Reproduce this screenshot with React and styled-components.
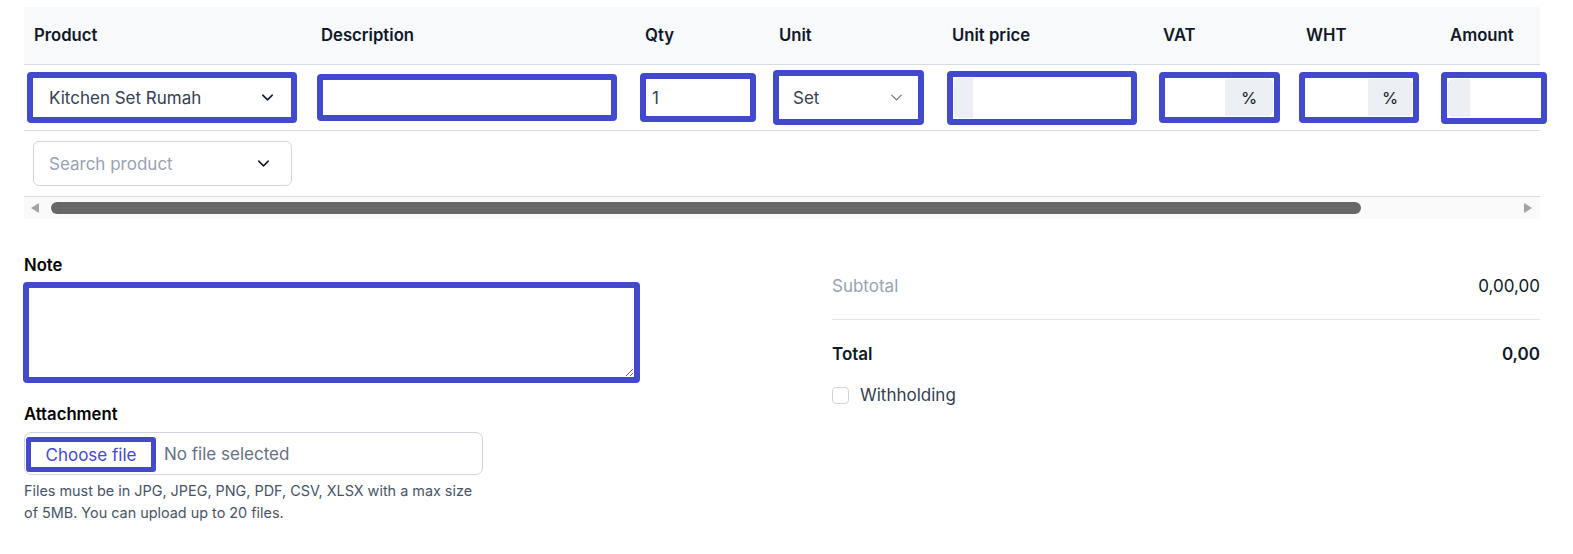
import styled, { createGlobalStyle } from 'styled-components';
import { ChevronDown } from 'lucide-react';

const GlobalStyle = createGlobalStyle`
  body {
    margin: 0;
    background: #fff;
    font-family: Inter, "Noto Sans", sans-serif;
    color: #344054;
  }
  * { box-sizing: border-box; }
`

const columns = [
  { key: 'product', label: 'Product', width: 287 },
  { key: 'desc', label: 'Description', width: 324 },
  { key: 'qty', label: 'Qty', width: 134 },
  { key: 'unit', label: 'Unit', width: 173 },
  { key: 'price', label: 'Unit price', width: 211 },
  { key: 'vat', label: 'VAT', width: 143 },
  { key: 'wht', label: 'WHT', width: 144 },
  { key: 'amount', label: 'Amount', width: 100 },
]
const template = columns.map(c => `${c.width}px`).join(' ')

const App = () => {
  return (
    <>
      <GlobalStyle />
      <Page>
        <TableWrap>
          <HeaderRow>
            {columns.map(c => <HeadCell key={c.key}>{c.label}</HeadCell>)}
          </HeaderRow>
          <BodyRow>
            <Cell>
              <Field $w={270} $h={51} $ml={3}>
                <FieldText>Kitchen Set Rumah</FieldText>
                <Chevron><ChevronDown size={19} strokeWidth={1.9} color="#101828" /></Chevron>
              </Field>
            </Cell>
            <Cell><Field $w={300} $h={47} $ml={6} /></Cell>
            <Cell>
              <Field $w={116} $h={49} $ml={5}>
                <FieldText $pl={6}>1</FieldText>
              </Field>
            </Cell>
            <Cell>
              <Field $w={151} $h={55} $ml={4}>
                <FieldText $pl={14}>Set</FieldText>
                <Chevron $mr={12}><ChevronDown size={19} strokeWidth={1.4} color="#667085" /></Chevron>
              </Field>
            </Cell>
            <Cell>
              <Field $w={190} $h={54} $ml={5}>
                <Addon $w={19} $side="left" />
              </Field>
            </Cell>
            <Cell>
              <Field $w={121} $h={51} $ml={6}>
                <Spacer />
                <Addon $w={48} $side="right">%</Addon>
              </Field>
            </Cell>
            <Cell>
              <Field $w={120} $h={51} $ml={3}>
                <Spacer />
                <Addon $w={44} $side="right">%</Addon>
              </Field>
            </Cell>
            <Cell>
              <Field $w={106} $h={52} $ml={1}>
                <Addon $w={22} $side="left" />
              </Field>
            </Cell>
          </BodyRow>
          <BodyRow>
            <Cell>
              <SearchSelect>
                <Placeholder>Search product</Placeholder>
                <ChevronDown size={19} strokeWidth={1.9} color="#101828" />
              </SearchSelect>
            </Cell>
          </BodyRow>
          <ScrollBar>
            <Arrow $dir="left" />
            <Thumb />
            <Arrow $dir="right" />
          </ScrollBar>
        </TableWrap>

        <BottomGrid>
          <LeftCol>
            <Label>Note</Label>
            <NoteArea />
            <Label style={{ marginTop: 21 }}>Attachment</Label>
            <FileBox>
              <ChooseBtn>Choose file</ChooseBtn>
              <NoFile>No file selected</NoFile>
            </FileBox>
            <Help>Files must be in JPG, JPEG, PNG, PDF, CSV, XLSX with a max size of 5MB. You can upload up to 20 files.</Help>
          </LeftCol>
          <Summary>
            <SumRow>
              <SumLabel>Subtotal</SumLabel>
              <SumValue>0,00,00</SumValue>
            </SumRow>
            <Divider />
            <SumRow>
              <SumLabel $bold>Total</SumLabel>
              <SumValue $bold>0,00</SumValue>
            </SumRow>
            <CheckRow>
              <CheckBox />
              <CheckLabel>Withholding</CheckLabel>
            </CheckRow>
          </Summary>
        </BottomGrid>
      </Page>
    </>
  );
}

const Page = styled.div`
  padding: 7px 33px 0 24px;
  width: 1573px;
`
const TableWrap = styled.div`
  width: 1516px;
`
const HeaderRow = styled.div`
  display: grid;
  grid-template-columns: ${template};
  height: 58px;
  background: #f8f9fb;
  border-bottom: 1px solid #d5dce5;
`
const HeadCell = styled.div`
  display: flex;
  align-items: center;
  padding: 0 10px 2px;
  font-size: 16.7px;
  font-weight: 600;
  color: #101828;
  white-space: nowrap;
`
const BodyRow = styled.div`
  display: grid;
  grid-template-columns: ${template};
  height: 66px;
  border-bottom: 1px solid #d5dce5;
`
const Cell = styled.div`
  display: flex;
  align-items: center;
  min-width: 0;
`
const Field = styled.div`
  flex: none;
  width: ${p => p.$w}px;
  height: ${p => p.$h}px;
  margin-left: ${p => p.$ml}px;
  border: 6px solid #4349cc;
  border-radius: 4px;
  background: #fff;
  display: flex;
  align-items: center;
  overflow: hidden;
`
const FieldText = styled.span`
  flex: 1;
  padding-left: ${p => p.$pl ?? 16}px;
  font-size: 17px;
  color: #344054;
  white-space: nowrap;
`
const Chevron = styled.span`
  display: flex;
  margin-right: ${p => p.$mr ?? 14}px;
`
const Spacer = styled.span`
  flex: 1;
`
const Addon = styled.span`
  width: ${p => p.$w}px;
  align-self: stretch;
  margin: 1px;
  background: #eceff3;
  border-radius: ${p => p.$side === 'left' ? '5px 0 0 5px' : '0 5px 5px 0'};
  display: flex;
  align-items: center;
  justify-content: center;
  font-size: 16.5px;
  color: #101828;
`
const SearchSelect = styled.div`
  width: 259px;
  height: 45px;
  margin-left: 9px;
  border: 1px solid #d0d5dd;
  border-radius: 6px;
  display: flex;
  align-items: center;
  justify-content: space-between;
  padding: 0 18px 0 15px;
`
const Placeholder = styled.span`
  font-size: 17px;
  color: #98a2b3;
`
const ScrollBar = styled.div`
  height: 22px;
  background: #fafafa;
  display: flex;
  align-items: center;
  padding: 0 8px 0 7px;
  gap: 12px;
`
const Arrow = styled.span`
  width: 0;
  height: 0;
  border-top: 5px solid transparent;
  border-bottom: 5px solid transparent;
  ${p => p.$dir === 'left'
    ? 'border-right: 8px solid #a3a3a3;'
    : 'border-left: 8px solid #a3a3a3; margin-left: auto;'}
`
const Thumb = styled.span`
  width: 1310px;
  height: 12px;
  border-radius: 6px;
  background: #686868;
`
const BottomGrid = styled.div`
  display: grid;
  grid-template-columns: 1fr 708px;
  width: 1516px;
  margin-top: 36px;
`
const LeftCol = styled.div`
  display: flex;
  flex-direction: column;
  align-items: flex-start;
`
const Label = styled.div`
  font-size: 16.7px;
  font-weight: 600;
  line-height: 20px;
  color: #000;
  margin-bottom: 7px;
`
const NoteArea = styled.textarea`
  width: 617px;
  height: 101px;
  margin-left: -1px;
  border: 6px solid #4349cc;
  border-radius: 4px;
  outline: none;
  resize: vertical;
  font-family: inherit;
`
const FileBox = styled.div`
  width: 459px;
  height: 43px;
  margin-top: 1px;
  border: 1px solid #d0d5dd;
  border-radius: 7px;
  display: flex;
  align-items: center;
  padding-left: 1px;
`
const ChooseBtn = styled.button`
  width: 130px;
  height: 35px;
  margin-top: 2px;
  border: 5px solid #4349cc;
  border-radius: 3px;
  background: #fff;
  font-family: inherit;
  font-size: 17px;
  color: #4349cc;
  padding: 0;
`
const NoFile = styled.span`
  margin-left: 8px;
  font-size: 17px;
  color: #667085;
`
const Help = styled.p`
  width: 456px;
  margin: 5px 0 0;
  font-size: 14.4px;
  line-height: 22px;
  color: #475467;
`
const Summary = styled.div`
  padding-top: 19px;
`
const SumRow = styled.div`
  display: flex;
  justify-content: space-between;
  align-items: center;
  line-height: 24px;
`
const SumLabel = styled.span`
  font-size: 17px;
  color: ${p => p.$bold ? '#101828' : '#98a2b3'};
  font-weight: ${p => p.$bold ? 600 : 400};
`
const SumValue = styled.span`
  font-size: 17px;
  color: #101828;
  font-weight: ${p => p.$bold ? 600 : 400};
`
const Divider = styled.div`
  height: 1px;
  background: #e4e7ec;
  margin: 21px 0 22px;
`
const CheckRow = styled.label`
  display: flex;
  align-items: center;
  gap: 11px;
  margin-top: 17px;
  line-height: 24px;
`
const CheckBox = styled.span`
  width: 17px;
  height: 17px;
  border: 1px solid #d0d5dd;
  border-radius: 4px;
  background: #fff;
`
const CheckLabel = styled.span`
  font-size: 17px;
  color: #344054;
`

export default App;
